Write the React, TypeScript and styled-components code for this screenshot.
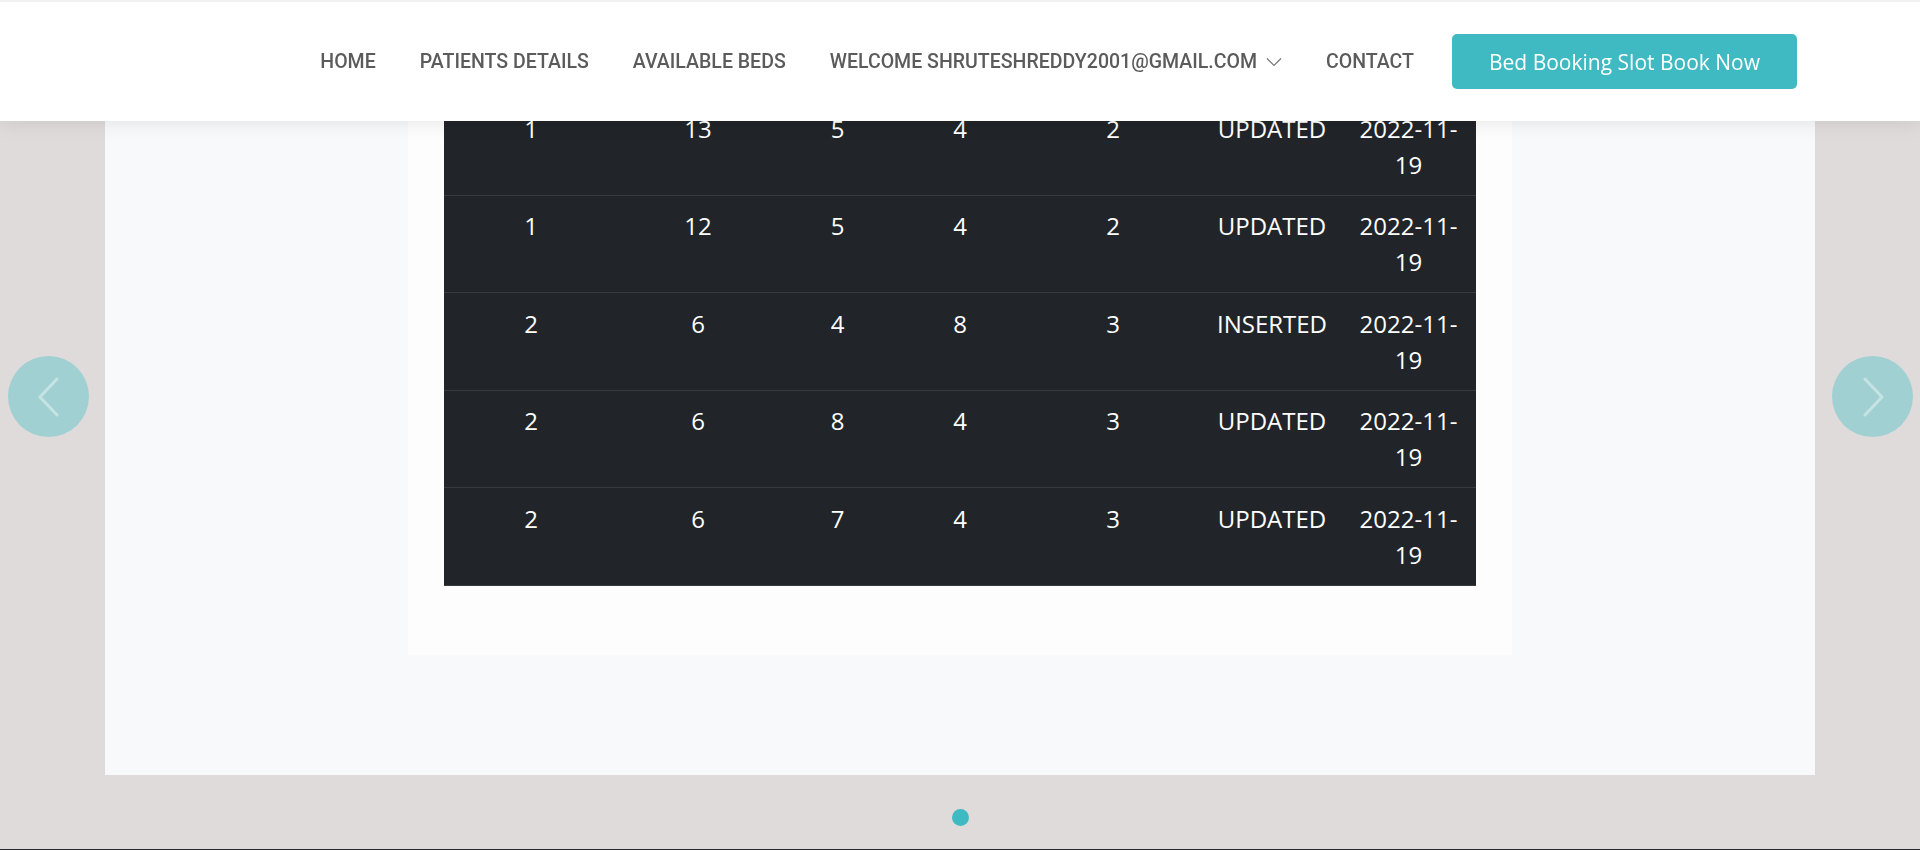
import React from "react";
import styled, { createGlobalStyle } from "styled-components";

const Global = createGlobalStyle`
  html, body { margin: 0; padding: 0; }
  body { background: #e0dbdb; font-family: "Open Sans", "Liberation Sans", sans-serif; overflow: hidden; }
`;

const Page = styled.div`
  position: relative;
  height: 850px;
  overflow: hidden;
  background: #e0dbdb;
  display: flex;
  flex-direction: column;
  border-bottom: 1px solid #26282b;
  box-sizing: border-box;
`;

const Header = styled.header`
  position: fixed;
  top: 0;
  left: 0;
  right: 0;
  height: 121px;
  box-sizing: border-box;
  border-top: 2px solid #f1f1f1;
  background: #fff;
  box-shadow: 0 2px 18px rgba(0, 0, 0, 0.09);
  display: flex;
  align-items: center;
  justify-content: flex-end;
  padding: 0 123px 0 0;
  z-index: 10;
`;

const Nav = styled.nav`
  display: flex;
  align-items: center;
  gap: 44px;
`;

const NavLink = styled.a`
  font-family: Roboto, "Liberation Sans", sans-serif;
  font-size: 19.55px;
  font-weight: 500;
  color: #5b5b5b;
  text-decoration: none;
  display: flex;
  align-items: center;
  gap: 9px;
  white-space: nowrap;
`;

const BookButton = styled.a`
  margin-left: 38px;
  width: 345px;
  height: 55px;
  border-radius: 5px;
  background: #3fbac2;
  color: #fff;
  font-family: "Open Sans", "Liberation Sans", sans-serif;
  font-size: 21px;
  display: flex;
  align-items: center;
  justify-content: center;
  text-decoration: none;
`;

const Panel = styled.section`
  margin: 0 105px;
  background: #f7f9fa;
  padding: 0 0 120px;
  display: flex;
  justify-content: center;
`;

const Card = styled.div`
  width: 1104px;
  box-sizing: border-box;
  background: #fdfdfd;
  padding: 98px 36px 69px;
`;

const Table = styled.table`
  width: 100%;
  border-collapse: collapse;
  background: #212529;
  color: #fff;
  font-family: "Open Sans", "Liberation Sans", sans-serif;
  font-size: 24px;
  line-height: 36px;
  table-layout: fixed;
`;

const Row = styled.tr`
  border-bottom: 1px solid #373b3e;
`;

const Cell = styled.td`
  padding: 12.5px 12px 12px;
  text-align: center;
  vertical-align: top;
`;

const Footer = styled.div`
  flex: 1;
  display: flex;
  justify-content: center;
  padding-top: 34px;
`;

const Dot = styled.span`
  width: 17px;
  height: 17px;
  border-radius: 50%;
  background: #3fbac2;
`;

const Arrow = styled.button<{ $side: "left" | "right" }>`
  position: absolute;
  top: 356px;
  ${(p) => (p.$side === "left" ? "left: 8px;" : "right: 7px;")}
  width: 81px;
  height: 81px;
  border-radius: 50%;
  border: none;
  padding: 0;
  background: #a1d0d3;
  display: flex;
  align-items: center;
  justify-content: center;
`;

const cols = [174, 160, 119, 126, 180, 138, 135];

const rows = [
  ["1", "13", "5", "4", "2", "UPDATED"],
  ["1", "12", "5", "4", "2", "UPDATED"],
  ["2", "6", "4", "8", "3", "INSERTED"],
  ["2", "6", "8", "4", "3", "UPDATED"],
  ["2", "6", "7", "4", "3", "UPDATED"],
];

const Chevron = ({ dir }: { dir: "left" | "right" }) => (
  <svg width="24" height="40" viewBox="0 0 24 40" fill="none">
    <path
      d={dir === "left" ? "M20 2 L3 20 L20 38" : "M4 2 L21 20 L4 38"}
      stroke="#c6e3e4"
      strokeWidth="3"
      strokeLinecap="round"
      strokeLinejoin="round"
    />
  </svg>
);

export default function App() {
  return (
    <>
      <Global />
      <Page>
        <Header>
          <Nav>
            <NavLink href="#">HOME</NavLink>
            <NavLink href="#">PATIENTS DETAILS</NavLink>
            <NavLink href="#">AVAILABLE BEDS</NavLink>
            <NavLink href="#">
              WELCOME SHRUTESHREDDY2001@GMAIL.COM
              <svg width="16" height="10" viewBox="0 0 16 10" fill="none">
                <path d="M1 1.5 L8 8.5 L15 1.5" stroke="#777" strokeWidth="1.2" />
              </svg>
            </NavLink>
            <NavLink href="#">CONTACT</NavLink>
          </Nav>
          <BookButton href="#">Bed Booking Slot Book Now</BookButton>
        </Header>
        <Panel>
          <Card>
            <Table>
              <colgroup>
                {cols.map((w, i) => (
                  <col key={i} style={{ width: w }} />
                ))}
              </colgroup>
              <tbody>
                {rows.map((r, i) => (
                  <Row key={i}>
                    {r.map((c, j) => (
                      <Cell key={j}>{c}</Cell>
                    ))}
                    <Cell>
                      2022-11-
                      <br />
                      19
                    </Cell>
                  </Row>
                ))}
              </tbody>
            </Table>
          </Card>
        </Panel>
        <Footer>
          <Dot />
        </Footer>
        <Arrow $side="left" aria-label="Previous">
          <Chevron dir="left" />
        </Arrow>
        <Arrow $side="right" aria-label="Next">
          <Chevron dir="right" />
        </Arrow>
      </Page>
    </>
  );
}
